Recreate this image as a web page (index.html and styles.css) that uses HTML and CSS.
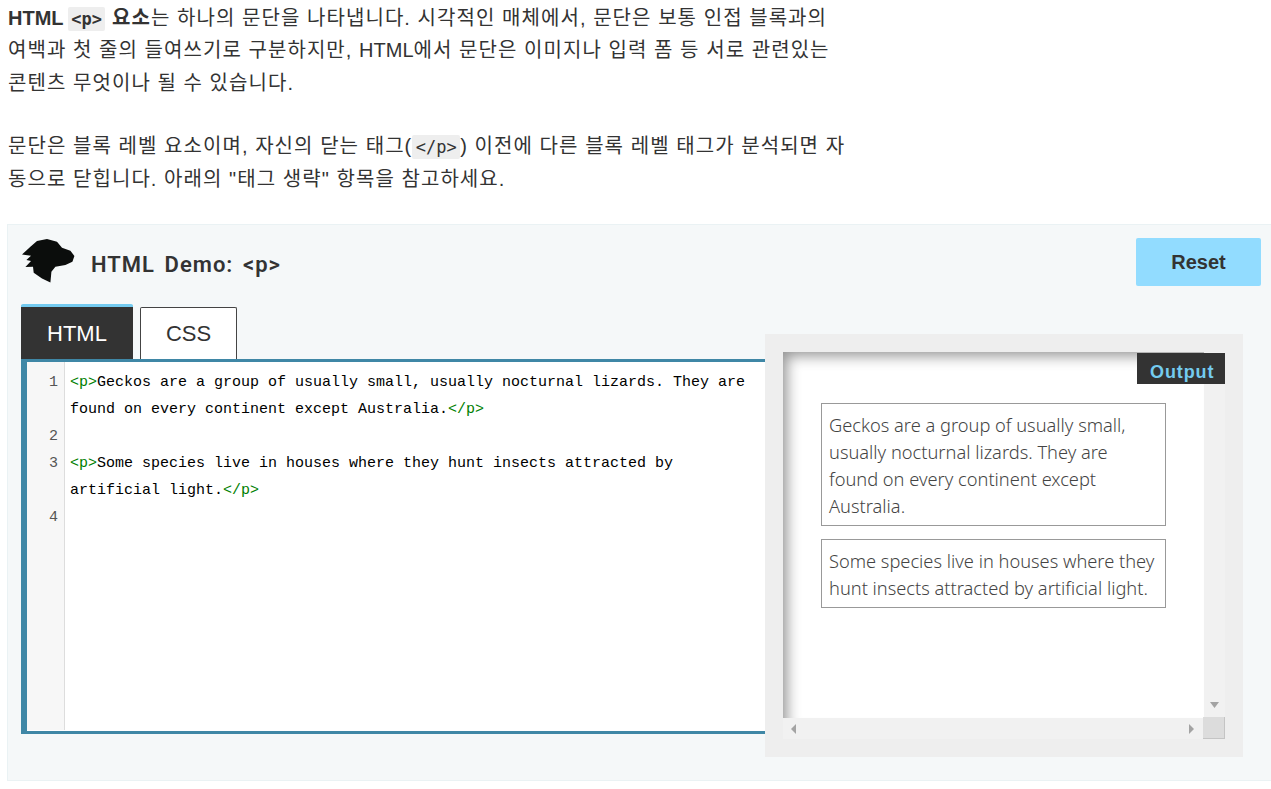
FILE: index.html
```html
<!DOCTYPE html>
<html lang="ko">
<head>
<meta charset="utf-8">
<title>p</title>
<link rel="stylesheet" href="styles.css">
</head>
<body>
<div class="intro">
<p><strong><span class="lat">HTML </span><code class="lead">&lt;p&gt;</code> 요소</strong>는 하나의 문단을 나타냅니다. 시각적인 매체에서, 문단은 보통 인접 블록과의<br>여백과 첫 줄의 들여쓰기로 구분하지만, <span class="lat">HTML</span>에서 문단은 이미지나 입력 폼 등 서로 관련있는<br>콘텐츠 무엇이나 될 수 있습니다.</p>
<p>문단은 블록 레벨 요소이며, 자신의 닫는 태그(<code class="plain">&lt;/p&gt;</code>) 이전에 다른 블록 레벨 태그가 분석되면 자<br>동으로 닫힙니다. 아래의 "태그 생략" 항목을 참고하세요.</p>
</div>
<section class="demo">
  <header class="demo-head">
    <svg class="logo" viewBox="0 0 54 44" aria-hidden="true"><path d="M0 15.400 L8.400 7.700 L15 2 L25 0 L35 2.700 L40 8.700 L48.400 11.700 L52.400 17 L50.400 22.700 L43.400 26 L33.400 27.700 L29.400 32.700 L28.400 43.400 L20 39.400 L11.700 33.700 L11 27.700 L3.400 28 L9 22 L4.400 21 L9 16.700 Z" fill="#0b0d0c"/></svg>
    <h4 class="demo-title">HTML Demo: &lt;p&gt;</h4>
    <button class="reset" type="button">Reset</button>
  </header>
  <div class="demo-main">
    <div class="edit-col">
      <div class="tabs">
        <div class="tab tab-active">HTML</div>
        <div class="tab">CSS</div>
      </div>
      <div class="editor">
        <div class="gutter">
          <div class="num">1</div><div class="num"></div><div class="num">2</div><div class="num">3</div><div class="num"></div><div class="num">4</div>
        </div>
        <pre class="code"><span class="tag">&lt;p&gt;</span>Geckos are a group of usually small, usually nocturnal lizards. They are
found on every continent except Australia.<span class="tag">&lt;/p&gt;</span>

<span class="tag">&lt;p&gt;</span>Some species live in houses where they hunt insects attracted by
artificial light.<span class="tag">&lt;/p&gt;</span>
</pre>
      </div>
    </div>
    <div class="output-wrap">
      <div class="frame">
        <div class="frame-top">
          <div class="view">
            <div class="out-label">Output</div>
            <p class="out-p">Geckos are a group of usually small, usually nocturnal lizards. They are found on every continent except Australia.</p>
            <p class="out-p">Some species live in houses where they hunt insects attracted by artificial light.</p>
          </div>
          <div class="vbar"><svg class="arrow-d" viewBox="0 0 9 6" aria-hidden="true"><path d="M0 0H9L4.500 6Z" fill="#a3a3a3"/></svg></div>
        </div>
        <div class="hbar">
          <svg class="arrow-h" viewBox="0 0 6 10" aria-hidden="true"><path d="M5 0V10L0 5Z" fill="#a3a3a3"/></svg>
          <svg class="arrow-h" viewBox="0 0 6 10" aria-hidden="true"><path d="M0 0V10L5 5Z" fill="#a3a3a3"/></svg>
          <div class="corner"></div>
        </div>
      </div>
    </div>
  </div>
</section>
</body>
</html>
```
FILE: styles.css
```css
html, body { margin: 0; padding: 0; background: #fff; }
body {
  height: 789px;
  overflow: hidden;
  font-family: "Liberation Sans", "Noto Sans CJK KR", sans-serif;
  color: #333;
}
.intro { padding: 2px 0 0 8px; width: 860px; font-size: 20px; line-height: 32.400px; letter-spacing: 1.060px; }
.intro p { margin: 0 0 31px; }
.intro p:last-child { margin-bottom: 0; }
.intro strong { font-weight: 700; }
.lat { letter-spacing: 0; }
code {
  font-family: "DejaVu Sans Mono", monospace;
  font-size: 17px;
  line-height: 1;
  letter-spacing: 0;
  font-weight: 700;
  background: #eee;
  border-radius: 2px;
  padding: 2px 3.500px;
}
code.lead { margin-left: -1px; }
code.plain { font-weight: 400; }
.demo {
  box-sizing: border-box;
  margin: 29px 0 0 7px;
  height: 557px;
  background: #f5f8f9;
  border: 1px solid #eaf2f4;
  border-right: 0;
  padding: 13px 10px 0 13px;
}
.demo-head { display: flex; align-items: flex-start; height: 66px; }
.logo { width: 54px; height: 44px; margin: 1px 0 0 1px; flex: none; }
.demo-title {
  margin: 13px 0 0 15px;
  font-size: 22px;
  line-height: 28px;
  font-weight: 600;
  letter-spacing: 1px;
  word-spacing: 3.200px;
  font-family: "Roboto", "Liberation Sans", sans-serif;
  color: #333;
  flex: 1;
}
.reset {
  width: 125px;
  height: 48px;
  border: 0;
  border-radius: 2px;
  background: #92dcff;
  color: #333;
  font: 700 20px "Liberation Sans", sans-serif;
  padding: 0;
}
.demo-main { display: flex; align-items: flex-start; }
.edit-col { width: 744px; flex: none; }
.tabs { display: flex; align-items: flex-end; gap: 7px; height: 55px; }
.tab {
  box-sizing: border-box;
  width: 97px;
  height: 52px;
  border: 1px solid #444;
  border-bottom: 0;
  border-radius: 2px 2px 0 0;
  background: #fff;
  color: #333;
  font-size: 22px;
  line-height: 52px;
  text-align: center;
}
.tab-active {
  width: 112px;
  height: 55px;
  border: 0;
  border-top: 3px solid #74cbf0;
  padding-top: 1px;
  background: #333;
  color: #fff;
}
.editor {
  box-sizing: border-box;
  height: 375px;
  display: flex;
  background: #fff;
  border: solid #3f87a6;
  border-width: 3px 0 3px 6px;
  font-family: "Liberation Mono", monospace;
  font-size: 15px;
  line-height: 27px;
}
.gutter {
  box-sizing: border-box;
  width: 38px;
  height: 368px;
  flex: none;
  background: #f7f7f7;
  border-right: 1px solid #ddd;
  padding: 7px 6px 0 0;
  text-align: right;
  color: #555;
}
.num { height: 27px; }
.code {
  margin: 0;
  padding: 7px 0 0 5px;
  font: inherit;
  color: #000;
  white-space: pre;
}
.tag { color: #008000; }
.output-wrap {
  box-sizing: border-box;
  width: 478px;
  height: 423px;
  margin-top: 30px;
  padding: 18px;
  background: #eee;
}
.frame { width: 442px; height: 387px; display: flex; flex-direction: column; }
.frame-top { display: flex; height: 366px; }
.view {
  position: relative;
  box-sizing: border-box;
  width: 421px;
  padding: 51px 38px 0;
  background: #fff;
  box-shadow: inset 9px 9px 14px -5px rgba(0,0,0,.42);
  font-family: "Noto Sans", sans-serif;
  font-size: 18.250px;
  font-weight: 300;
  line-height: 27px;
  color: #444;
}
.out-label {
  position: absolute;
  top: 1px;
  left: 354px;
  width: 88px;
  height: 31px;
  box-sizing: border-box;
  padding: 5px 0 0 13px;
  background: #333;
  color: #74cbf0;
  font-family: "Liberation Sans", sans-serif;
  font-weight: 700;
  font-size: 18px;
  letter-spacing: .9px;
  line-height: 28px;
}
.out-p {
  box-sizing: border-box;
  width: 345px;
  margin: 0 0 13px;
  padding: 7px 7px 6px;
  border: 1px solid #999;
}
.vbar {
  width: 21px;
  background: #f1f1f1;
  display: flex;
  flex-direction: column;
  justify-content: flex-end;
  align-items: center;
}
.arrow-d { width: 9px; height: 6px; margin-bottom: 10px; }
.hbar {
  height: 21px;
  background: #f1f1f1;
  display: flex;
  align-items: center;
  position: relative;
  padding-left: 8px;
}
.arrow-h { width: 6px; height: 10px; }
.arrow-h + .arrow-h { margin-left: 392px; }
.corner {
  position: absolute;
  right: 0;
  top: -1px;
  width: 22px;
  height: 22px;
  box-sizing: border-box;
  background: #dcdcdc;
  border: solid #c4c4c4;
  border-width: 0 1px 1px 0;
}
```
